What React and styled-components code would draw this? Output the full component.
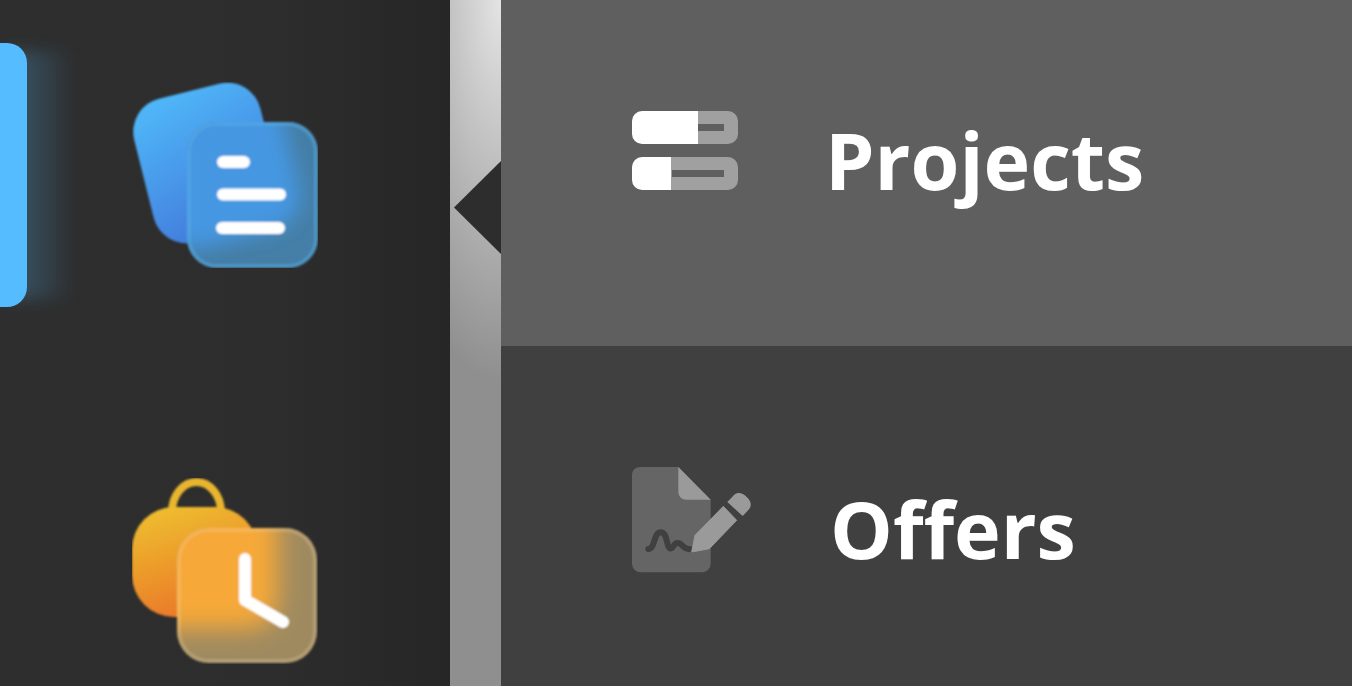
import styled, { createGlobalStyle } from 'styled-components';

const Global = createGlobalStyle`
  html, body { margin: 0; height: 100%; overflow: hidden; }
  #root { height: 100%; }
`;

const Page = styled.div`
  display: flex;
  height: 686px;
  font-family: "Open Sans", "Liberation Sans", sans-serif;
`;

const Sidebar = styled.nav`
  position: relative;
  isolation: isolate;
  flex: 0 0 450px;
  box-sizing: border-box;
  padding: 82px 0 0 132px;
  display: flex;
  flex-direction: column;
  gap: 210px;
  overflow: hidden;
  background: linear-gradient(90deg, #2e2e2e 0%, #2d2d2d 60%, #262626 100%);
`;

const ActiveBar = styled.div`
  position: absolute;
  left: -20px;
  top: 43px;
  width: 47px;
  height: 264px;
  border-radius: 20px;
  background: #55bcff;

  &::before {
    content: '';
    position: absolute;
    z-index: -1;
    left: 50%;
    top: 8px;
    bottom: 8px;
    width: 70px;
    background: linear-gradient(90deg, rgba(85, 188, 255, 0.26) 0%, rgba(85, 188, 255, 0.2) 40%, rgba(85, 188, 255, 0) 100%);
    filter: blur(8px);
  }
`;

const AppIcon = styled.svg`
  display: block;
  width: 186px;
  height: 186px;
  flex: none;
  position: relative;
`;

const Divider = styled.div`
  position: relative;
  flex: 0 0 51px;
  background: radial-gradient(ellipse 130px 380px at 100% 0, #e4e4e4 0%, #8f8f8f 100%);
`;

const Notch = styled.div`
  position: absolute;
  right: 0;
  top: 161px;
  width: 47px;
  height: 93px;
  background: #2d2d2d;
  clip-path: polygon(100% 0, 0 50%, 100% 100%);
`;

const Panel = styled.main`
  flex: 1;
  display: flex;
  flex-direction: column;
`;

const Row = styled.div`
  box-sizing: border-box;
  display: flex;
  align-items: flex-start;
  padding: ${(p) => p.$top}px 0 0 131px;
  height: ${(p) => p.$height}px;
  background: ${(p) => p.$bg};
`;

const RowIcon = styled.svg`
  display: block;
  flex: none;
`;

const Label = styled.div`
  margin: ${(p) => p.$top}px 0 0 ${(p) => p.$left}px;
  font-size: 79px;
  line-height: 108px;
  font-weight: 700;
  color: #fff;
`;

function ProjectsApp() {
  return (
    <AppIcon viewBox="0 0 186 186">
      <defs>
        <linearGradient id="blueBack" x1="0.3" y1="0" x2="0.55" y2="0.85">
          <stop offset="0" stopColor="#50b6f8" />
          <stop offset="1" stopColor="#4381de" />
        </linearGradient>
        <clipPath id="blueClip">
          <rect x="55" y="40" width="131" height="146" rx="30" />
        </clipPath>
        <filter id="blueBlur" x="-30%" y="-30%" width="160%" height="160%">
          <feGaussianBlur stdDeviation="10" />
        </filter>
        <filter id="soft" x="-20%" y="-20%" width="140%" height="140%">
          <feGaussianBlur stdDeviation="1" />
        </filter>
      </defs>
      <g filter="url(#soft)">
        <rect x="10" y="7" width="130" height="148" rx="34" transform="rotate(-14 75 81)" fill="url(#blueBack)" />
        <g clipPath="url(#blueClip)">
          <rect x="55" y="40" width="131" height="146" fill="#447ea6" />
          <rect x="18" y="-10" width="140" height="172" rx="34" transform="rotate(-14 75 81)" fill="#4597e2" filter="url(#blueBlur)" />
        </g>
        <rect x="57" y="42" width="127" height="142" rx="28" fill="none" stroke="#5ab0e6" strokeOpacity="0.45" strokeWidth="4" />
        <g stroke="#fff" strokeWidth="12" strokeLinecap="round">
          <line x1="91" y1="80" x2="112" y2="80" />
          <line x1="91" y1="112.500" x2="148" y2="112.500" />
          <line x1="90" y1="146" x2="147" y2="146" />
        </g>
      </g>
    </AppIcon>
  );
}

function OffersApp() {
  return (
    <AppIcon viewBox="0 0 186 186">
      <defs>
        <linearGradient id="bagBack" x1="0.25" y1="0" x2="0.6" y2="1">
          <stop offset="0" stopColor="#eebd2e" />
          <stop offset="1" stopColor="#ea752a" />
        </linearGradient>
        <clipPath id="bagClip">
          <rect x="45" y="50" width="140" height="135" rx="32" />
        </clipPath>
        <filter id="bagBlur" x="-30%" y="-30%" width="160%" height="160%">
          <feGaussianBlur stdDeviation="12" />
        </filter>
        <filter id="softBag" x="-20%" y="-20%" width="140%" height="140%">
          <feGaussianBlur stdDeviation="1" />
        </filter>
      </defs>
      <g filter="url(#softBag)">
        <path d="M40 34 A24.500 30 0 0 1 89 34" fill="none" stroke="#e8b52e" strokeWidth="8" />
        <rect x="0" y="29" width="125" height="110" rx="42" fill="url(#bagBack)" />
        <g clipPath="url(#bagClip)">
          <rect x="45" y="50" width="140" height="135" fill="#9f8a60" />
          <rect x="0" y="15" width="146" height="136" rx="30" fill="#f6a938" filter="url(#bagBlur)" />
        </g>
        <rect x="47" y="52" width="136" height="131" rx="30" fill="none" stroke="#f3d9a6" strokeOpacity="0.25" strokeWidth="4" />
        <path d="M113 81 V122 L151 144" fill="none" stroke="#fff" strokeWidth="12" strokeLinecap="round" strokeLinejoin="round" />
      </g>
    </AppIcon>
  );
}

function ProjectsGlyph() {
  return (
    <RowIcon width="106" height="80" viewBox="0 0 106 80">
      <path d="M66 0 H96 a10 10 0 0 1 10 10 V23 a10 10 0 0 1 -10 10 H66 Z M66 13 V20 H92 V13 Z" fill="#a0a0a0" fillRule="evenodd" />
      <path d="M66 0 H10 A10 10 0 0 0 0 10 V23 A10 10 0 0 0 10 33 H66 Z" fill="#fff" />
      <path d="M39 46 H96 a10 10 0 0 1 10 10 V69 a10 10 0 0 1 -10 10 H39 Z M40 59 V66 H92 V59 Z" fill="#a0a0a0" fillRule="evenodd" />
      <path d="M39 46 H10 A10 10 0 0 0 0 56 V69 A10 10 0 0 0 10 79 H39 Z" fill="#fff" />
    </RowIcon>
  );
}

function OffersGlyph() {
  return (
    <RowIcon width="119" height="106" viewBox="66 50 357 318">
      <path d="M90 50 H205 L302 148 V340 a26 26 0 0 1 -26 26 H92 a26 26 0 0 1 -26 -26 V74 a24 24 0 0 1 24 -24 Z" fill="#656565" />
      <path d="M205 50 L302 148 H228 a23 23 0 0 1 -23 -23 Z" fill="#9a9a9a" />
      <path d="M115 296 C136 296 130 246 152 246 C175 246 168 298 183 294 C195 290 190 276 205 278 C220 280 215 298 248 297" fill="none" stroke="#404040" strokeWidth="18" strokeLinecap="round" />
      <path d="M245 305 L255 255 L340 168 L380 210 L298 295 Z" fill="#9a9a9a" stroke="#9a9a9a" strokeWidth="3" strokeLinejoin="round" />
      <path d="M352 155 L372 134 C384 124 398 128 410 140 C424 152 426 166 416 178 L398 197 Z" fill="#9a9a9a" />
    </RowIcon>
  );
}

export default function App() {
  return (
    <Page>
      <Global />
      <Sidebar>
        <ActiveBar />
        <ProjectsApp />
        <OffersApp />
      </Sidebar>
      <Divider>
        <Notch />
      </Divider>
      <Panel>
        <Row $height={346} $top={111} $bg="#5f5f5f">
          <ProjectsGlyph />
          <Label $top={-5} $left={87}>Projects</Label>
        </Row>
        <Row $height={340} $top={121} $bg="#404040">
          <OffersGlyph />
          <Label $top={8} $left={79}>Offers</Label>
        </Row>
      </Panel>
    </Page>
  );
}
